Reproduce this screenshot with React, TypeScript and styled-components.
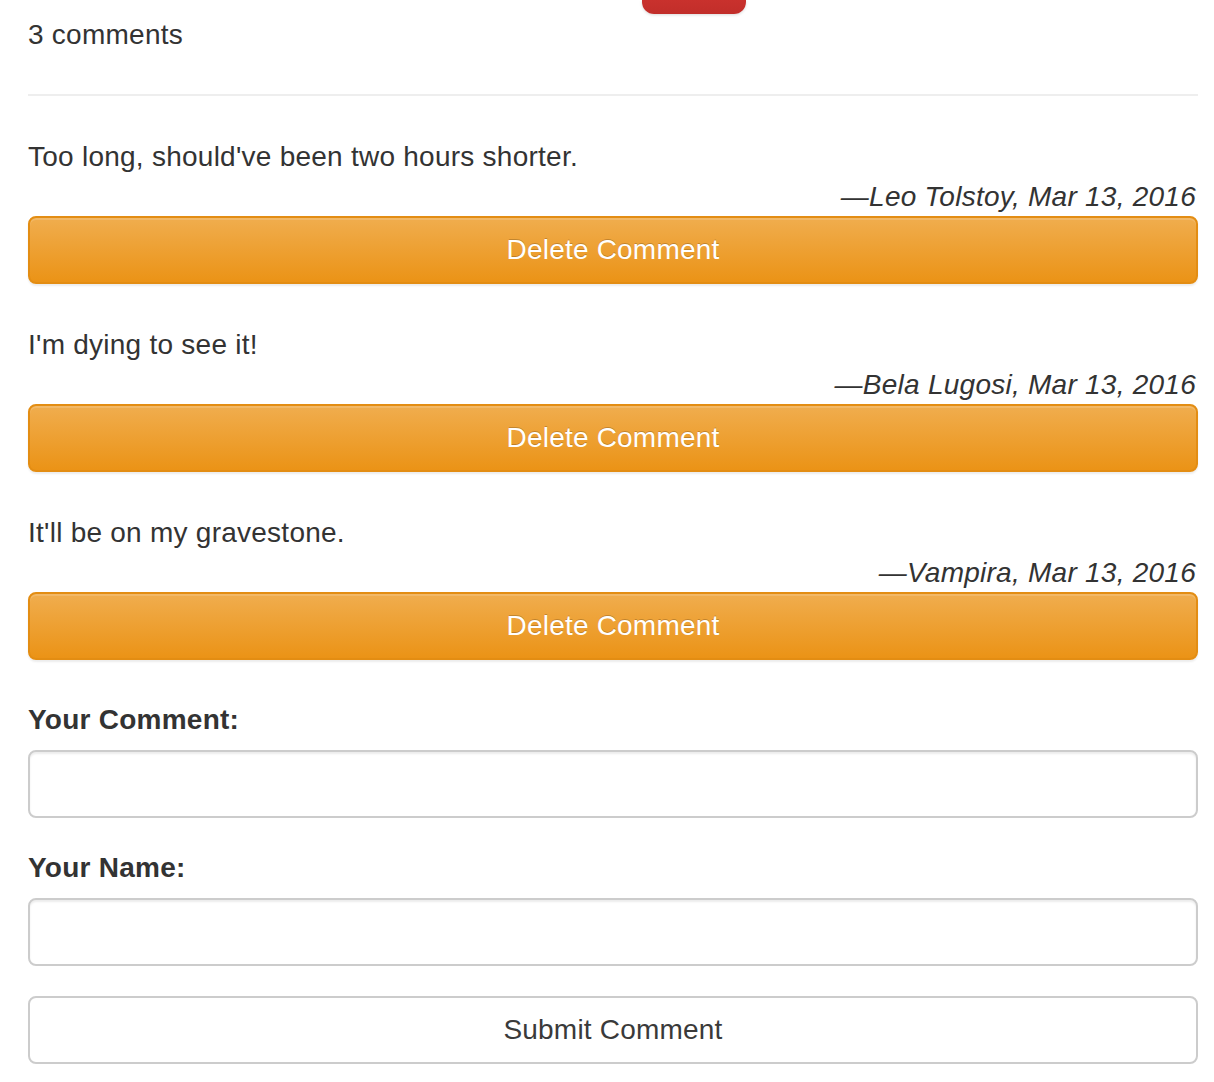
import React from "react";
import styled, { createGlobalStyle } from "styled-components";

const Global = createGlobalStyle`
  html, body { margin: 0; padding: 0; background: #fff; }
  body {
    font-family: "Liberation Sans", Arial, sans-serif;
    font-size: 28px;
    line-height: 40px;
    letter-spacing: 0.25px;
    color: #333;
  }
  * { box-sizing: border-box; }
`;

const Page = styled.div`
  width: 1198px;
  padding-left: 28px;
`;

const TopButton = styled.div`
  margin-left: 614px;
  width: 104px;
  height: 14px;
  background: linear-gradient(#c9312d, #c12e2a);
  border-radius: 0 0 12px 12px;
  box-shadow: 0 1px 3px rgba(0, 0, 0, 0.15);
`;

const Count = styled.div`
  height: 40px;
  padding-top: 1px;
`;

const Rule = styled.hr`
  margin: 40px 0;
  border: 0;
  border-top: 2px solid #eee;
`;

const Comment = styled.div`
  margin-bottom: 40px;
`;

const Text = styled.p`
  margin: 0;
  position: relative;
  top: 1px;
`;

const Byline = styled.div`
  text-align: right;
  font-style: italic;
  padding-right: 2px;
  position: relative;
  top: 1px;
`;

const Button = styled.button<{ $variant: "warning" | "default" }>`
  display: block;
  width: 100%;
  height: 68px;
  padding: 0;
  border-radius: 8px;
  font-family: "Liberation Sans", Arial, sans-serif;
  font-size: 28px;
  line-height: 40px;
  letter-spacing: 0.2px;
  cursor: pointer;
  ${(p) =>
    p.$variant === "warning"
      ? `
    color: #fff;
    border: 2px solid #e38d13;
    background: linear-gradient(#f0ad4e, #eb9316);
    text-shadow: 0 -1px 0 rgba(0,0,0,0.2);
    box-shadow: inset 0 2px 0 rgba(255,255,255,0.15), 0 2px 2px rgba(0,0,0,0.075);
  `
      : `
    color: #3a3a3a;
    border: 2px solid #ccc;
    background: #fff;
  `}
`;

const Group = styled.div`
  margin-bottom: 30px;
`;

const Label = styled.label`
  display: block;
  font-weight: bold;
  margin-bottom: 10px;
`;

const Input = styled.input`
  display: block;
  width: 100%;
  height: 68px;
  padding: 12px 24px;
  font-size: 28px;
  font-family: "Liberation Sans", Arial, sans-serif;
  color: #555;
  background: #fff;
  border: 2px solid #ccc;
  border-radius: 8px;
  box-shadow: inset 0 2px 2px rgba(0, 0, 0, 0.075);
  outline: none;
`;

const comments = [
  { text: "Too long, should've been two hours shorter.", author: "Leo Tolstoy" },
  { text: "I'm dying to see it!", author: "Bela Lugosi" },
  { text: "It'll be on my gravestone.", author: "Vampira" },
];

export default function App() {
  return (
    <>
      <Global />
      <Page>
        <TopButton />
        <Count>3 comments</Count>
        <Rule />
        {comments.map((c) => (
          <Comment key={c.author}>
            <Text>{c.text}</Text>
            <Byline>—{c.author}, Mar 13, 2016</Byline>
            <Button $variant="warning">Delete Comment</Button>
          </Comment>
        ))}
        <Group>
          <Label>Your Comment:</Label>
          <Input type="text" />
        </Group>
        <Group>
          <Label>Your Name:</Label>
          <Input type="text" />
        </Group>
        <Button $variant="default">Submit Comment</Button>
      </Page>
    </>
  );
}
